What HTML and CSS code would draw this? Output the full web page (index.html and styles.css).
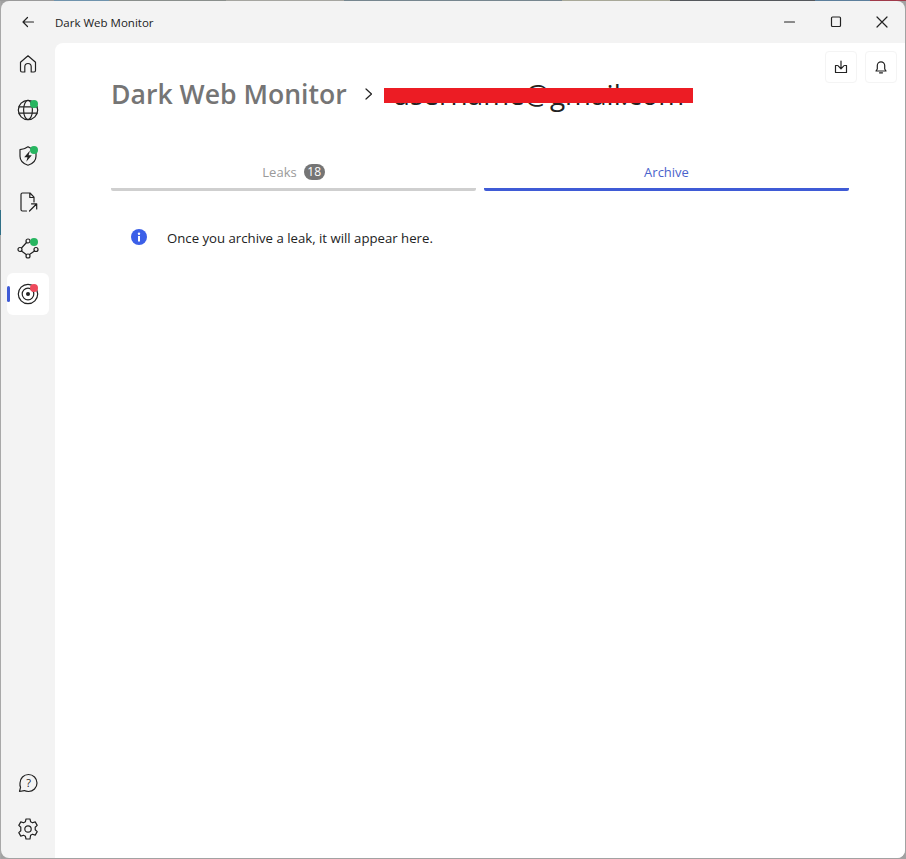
FILE: index.html
```html
<!DOCTYPE html>
<html lang="en">
<head>
<meta charset="utf-8">
<title>Dark Web Monitor</title>
<link rel="stylesheet" href="styles.css">
</head>
<body>
<div class="window">
  <header class="titlebar">
    <button class="back" aria-label="Back">
      <svg width="16" height="16" viewBox="0 0 16 16" class="ico"><path d="M13.500 8H3M7.500 3.500 3 8l4.500 4.500"/></svg>
    </button>
    <span class="app-name">Dark Web Monitor</span>
    <div class="controls">
      <span class="ctl"><svg width="16" height="16" viewBox="0 0 16 16" class="ico"><path d="M2.500 8h10"/></svg></span>
      <span class="ctl"><svg width="16" height="16" viewBox="0 0 16 16" class="ico"><rect x="3.500" y="3" width="9" height="9.500" rx="1"/></svg></span>
      <span class="ctl"><svg width="16" height="16" viewBox="0 0 16 16" class="ico"><path d="M3 3l10 10M13 3 3 13"/></svg></span>
    </div>
  </header>
  <div class="body">
    <nav class="sidebar">
      <div class="nav-group">
        <a class="nav-item">
          <svg width="22" height="22" viewBox="0 0 22 22" class="ico"><path d="M3.500 17.500V9.200L11 2.800l7.500 6.400v8.300c0 .9-.6 1.500-1.500 1.500h-2.800v-5.300a3.200 3.200 0 0 0-6.400 0V19H5c-.9 0-1.500-.6-1.500-1.500z"/></svg>
        </a>
        <a class="nav-item">
          <svg width="22" height="22" viewBox="0 0 22 22" class="ico"><circle cx="11" cy="11" r="9.700"/><ellipse cx="11" cy="11" rx="4.400" ry="9.700"/><path d="M2 7.800h18M2 14.200h18"/></svg>
          <span class="dot green"></span>
        </a>
        <a class="nav-item">
          <svg width="22" height="22" viewBox="0 0 22 22" class="ico"><path d="M11 1.800c2.500 1.800 5 2.700 8 2.900v6.500c0 4.200-3.200 7.500-8 9-4.800-1.500-8-4.800-8-9V4.700c3-.2 5.500-1.100 8-2.900z"/><path class="fill" d="M13 5.500 7.200 12.200h3.300l-1.200 4.500 5.500-6.500h-3.200z"/></svg>
          <span class="dot green"></span>
        </a>
        <a class="nav-item">
          <svg width="22" height="22" viewBox="0 0 22 22" class="ico"><path d="M9.500 20H5.500c-1 0-1.500-.7-1.500-1.500v-15C4 2.600 4.600 2 5.500 2H13l4 4.200V11M12.800 2v4.500H17M12.500 20l7-7M14.500 12.800h5.200V18"/></svg>
        </a>
        <a class="nav-item">
          <svg width="22" height="22" viewBox="0 0 22 22" class="ico"><circle cx="3" cy="12.500" r="2"/><circle cx="11" cy="19" r="2"/><circle cx="19" cy="12.500" r="2"/><circle cx="11" cy="4" r="2"/><path d="M4.500 11 9.500 5.500M12.500 17.500 17.500 14M4.500 14l5 3.700"/></svg>
          <span class="dot green"></span>
        </a>
        <a class="nav-item active">
          <span class="indicator"></span>
          <svg width="22" height="22" viewBox="0 0 22 22" class="ico"><circle cx="11" cy="11" r="9.700"/><circle cx="11" cy="11" r="5.800"/><circle class="fill" cx="11" cy="11" r="2"/></svg>
          <span class="dot red"></span>
        </a>
      </div>
      <div class="nav-group">
        <a class="nav-item">
          <svg width="22" height="22" viewBox="0 0 22 22" class="ico"><path d="M11.500 2.500a8.500 8.500 0 0 1 0 17c-1.700 0-3-.2-4.200-.9l-4.800.9 1.100-4.300C2.900 14 2.800 12.500 3 11a8.500 8.500 0 0 1 8.500-8.500z"/><text x="11.500" y="15" class="q">?</text></svg>
        </a>
        <a class="nav-item">
          <svg width="22" height="22" viewBox="0 0 22 22" class="ico"><circle cx="11" cy="11" r="3.200"/><path d="M9 1h4l.6 2.700 1.900 1.100 2.700-.9 2 3.500-2 1.900v2.400l2 1.900-2 3.500-2.700-.9-1.900 1.100L13 21H9l-.6-2.700-1.900-1.100-2.700.9-2-3.500 2-1.900V9.300l-2-1.900 2-3.500 2.700.9 1.900-1.100z"/></svg>
        </a>
      </div>
    </nav>
    <main class="content">
      <div class="actions">
        <button class="act" aria-label="Download">
          <svg width="16" height="16" viewBox="0 0 16 16" class="ico"><path d="M8 2v7.500M5.200 6.800 8 9.800l2.800-3M4.500 6.500H2.500v7h11v-7h-2"/></svg>
        </button>
        <button class="act" aria-label="Notifications">
          <svg width="16" height="16" viewBox="0 0 16 16" class="ico"><path d="M3 12h10l-1.300-2V6.500a3.700 3.700 0 0 0-7.400 0V10zM6.500 13.800h3"/></svg>
        </button>
      </div>
      <div class="crumbs">
        <h1 class="crumb-title">Dark Web Monitor</h1>
        <svg width="12" height="14" viewBox="0 0 12 14" class="ico chev"><path d="M3 2l5.500 5L3 12"/></svg>
        <span class="email">username@gmail.com<span class="redact"></span></span>
      </div>
      <div class="tabs">
        <div class="tab"><span class="tab-label">Leaks <span class="badge">18</span></span></div>
        <div class="tab selected"><span class="tab-label">Archive</span></div>
      </div>
      <div class="notice">
        <svg width="16" height="16" viewBox="0 0 16 16" class="info"><circle cx="8" cy="8" r="8"/><rect class="i" x="7" y="7" width="2" height="5.500"/><circle class="i" cx="8" cy="4.700" r="1.200"/></svg>
        <span>Once you archive a leak, it will appear here.</span>
      </div>
    </main>
  </div>
</div>
</body>
</html>
```

FILE: styles.css
```css
* { box-sizing: border-box; }
html, body { height: 100%; }
body {
  margin: 0;
  background:
    linear-gradient(90deg, #9a9a9a 0 6%, #6f93ad 6% 12%, #8a8f8c 12% 25%, #a5a5a0 25% 38%, #76868f 38% 62%, #a8a898 62% 74%, #55585c 74% 90%, #5c7f9c 90% 96%, #a03a4a 96%) 0 0 / 100% 1px no-repeat,
    linear-gradient(180deg, #a8a8a8 0 210px, #2f6f86 210px 235px, #a8a8a8 235px) 0 0 / 1px 100% no-repeat,
    #a2a2a2;
  font-family: "Open Sans", "Noto Sans", sans-serif;
  overflow: hidden;
  padding: 1px 1px 1px 1px;
}
.window {
  height: 857px;
  background: #f3f3f3;
  border-radius: 8px;
  display: flex;
  flex-direction: column;
  overflow: hidden;
}
.ico { fill: none; stroke: #222; stroke-width: 1.200; stroke-linecap: round; stroke-linejoin: round; display: block; }
.ico .fill { fill: #222; stroke: none; }
.ico .q { fill: #222; stroke: none; font-size: 11px; text-anchor: middle; font-family: "Open Sans", sans-serif; }

.titlebar { height: 42px; flex: none; display: flex; align-items: center; padding-left: 19px; }
.back { width: 16px; height: 16px; padding: 0; border: 0; background: none; margin-right: 19px; }
.app-name { font-size: 11.500px; color: #222; }
.controls { margin-left: auto; display: flex; }
.ctl { width: 46px; height: 42px; display: flex; align-items: center; justify-content: center; }

.body { flex: 1; display: flex; min-height: 0; }
.sidebar { width: 54px; flex: none; display: flex; flex-direction: column; justify-content: space-between; padding: 0 0 8px 6px; }
.nav-group { display: flex; flex-direction: column; gap: 4px; }
.nav-item { position: relative; width: 42px; height: 42px; display: flex; align-items: center; justify-content: center; border-radius: 6px; }
.nav-item.active { background: #fff; }
.indicator { position: absolute; left: 0; top: 13px; width: 3px; height: 16px; border-radius: 2px; background: #3f5bd6; }
.dot { position: absolute; left: 23px; top: 11px; width: 8px; height: 8px; border-radius: 50%; }
.dot.green { background: #27b560; }
.dot.red { background: #ee4a5c; }

.content { flex: 1; position: relative; background: #fff; border-top-left-radius: 8px; padding: 0 56px 0 56px; }
.actions { position: absolute; top: 8px; right: 8px; display: flex; gap: 8px; }
.act { width: 32px; height: 32px; padding: 0; background: #fff; border: 1px solid #f4f4f4; border-radius: 4px; display: flex; align-items: center; justify-content: center; }
.crumbs { display: flex; align-items: center; height: 38px; margin-top: 32px; }
.crumb-title { margin: 0; font-size: 26.600px; font-weight: 600; color: #757575; }
.chev { margin: 0 10px 0 16px; }
.email { position: relative; margin-left: 8px; font-size: 28px; color: #222; }
.redact { position: absolute; left: -9px; top: 13px; width: 309px; height: 15px; background: #ec1c24; }

.tabs { display: grid; grid-template-columns: 1fr 1fr; gap: 8px; margin-top: 39px; }
.tab { height: 39px; border-bottom: 3px solid #cfcfcf; border-radius: 0 0 2px 2px; display: flex; align-items: center; justify-content: center; padding-top: 4px; }
.tab.selected { border-bottom-color: #3f5bd6; }
.tab-label { font-size: 13px; color: #9a9a9a; display: flex; align-items: center; gap: 7px; }
.selected .tab-label { color: #4a63cc; }
.badge { background: #757575; color: #fff; border-radius: 8px; width: 21px; height: 16px; font-size: 12px; line-height: 16px; text-align: center; }

.notice { display: flex; align-items: center; margin-top: 38px; padding-left: 20px; gap: 20px; font-size: 13.200px; color: #222; }
.info { fill: #3b5fe8; flex: none; position: relative; top: -1px; }
.info .i { fill: #fff; }
```
